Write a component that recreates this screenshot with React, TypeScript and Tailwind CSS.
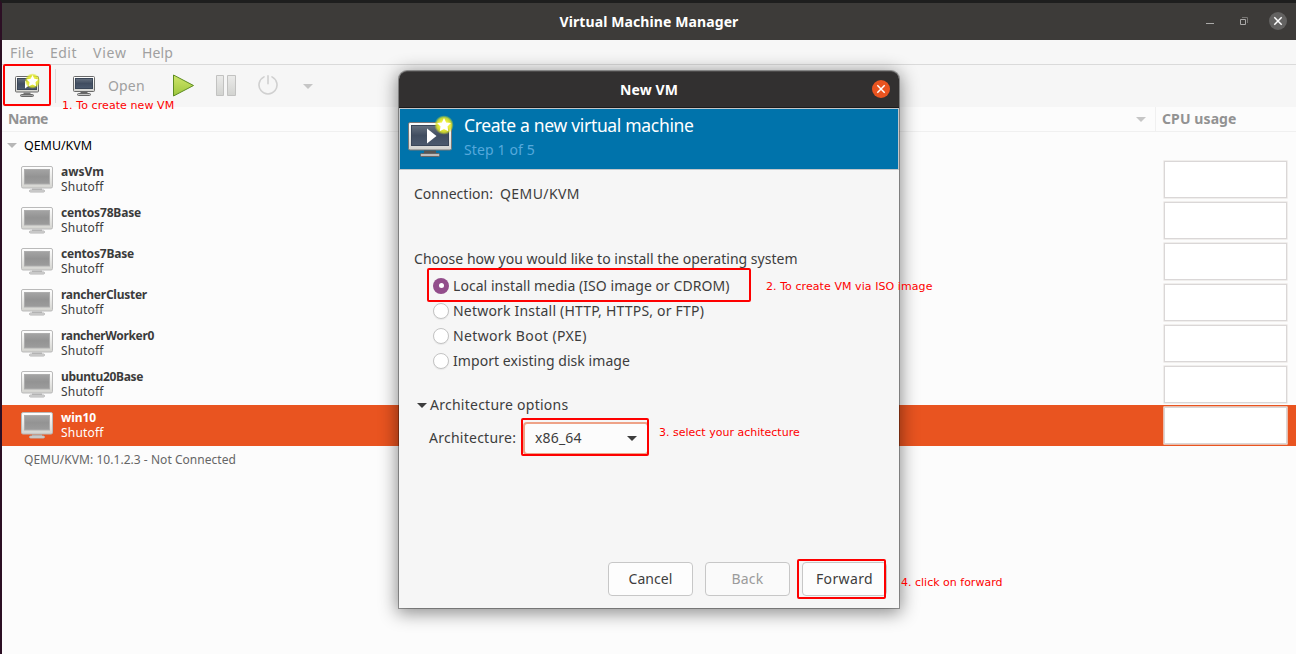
import type { ReactNode } from "react";

const STAR = "M0-6.2 1.9-2.3 6.2-1.7 3.1 1.3 3.8 5.6 0 3.6-3.8 5.6-3.1 1.3-6.2-1.7-1.9-2.3Z";

function Defs() {
  return (
    <svg className="absolute h-0 w-0" aria-hidden="true">
      <defs>
        <linearGradient id="screen" x1="0" y1="0" x2="0" y2="1">
          <stop offset="0" stopColor="#66717f" />
          <stop offset="0.5" stopColor="#414d60" />
          <stop offset="1" stopColor="#4c5a6e" />
        </linearGradient>
        <linearGradient id="bezel" x1="0" y1="0" x2="0" y2="1">
          <stop offset="0" stopColor="#ffffff" />
          <stop offset="1" stopColor="#d3d3cf" />
        </linearGradient>
        <linearGradient id="offScreen" x1="0" y1="0" x2="0" y2="1">
          <stop offset="0" stopColor="#a4a4a4" />
          <stop offset="0.5" stopColor="#939393" />
          <stop offset="1" stopColor="#9c9c9c" />
        </linearGradient>
        <linearGradient id="play" x1="0" y1="0" x2="0" y2="1">
          <stop offset="0" stopColor="#cfe66a" />
          <stop offset="1" stopColor="#9dc63c" />
        </linearGradient>
        <linearGradient id="pause" x1="0" y1="0" x2="0" y2="1">
          <stop offset="0" stopColor="#ebebea" />
          <stop offset="1" stopColor="#d2d3d0" />
        </linearGradient>
        <radialGradient id="glow">
          <stop offset="0.45" stopColor="#f0f03c" />
          <stop offset="0.75" stopColor="#dde527" stopOpacity="0.85" />
          <stop offset="1" stopColor="#d4e020" stopOpacity="0" />
        </radialGradient>
      </defs>
    </svg>
  );
}

function NewVmSmallIcon() {
  return (
    <svg width="26" height="26" viewBox="0 0 26 26" className="mb-0.5">
      <rect x="1.5" y="4.5" width="23" height="15.5" rx="1" fill="url(#bezel)" stroke="#6b6b6b" />
      <rect x="3.5" y="6.5" width="19" height="11" fill="url(#screen)" stroke="#3a4658" />
      <path d="M11 8.5 16.5 12.5 11 16.5Z" fill="#fff" />
      <path d="M9.5 20.5h7v2h-7z" fill="#777" />
      <rect x="6.5" y="22.5" width="13" height="2" rx="1" fill="#a5a5a5" stroke="#696969" />
      <circle cx="18.5" cy="9" r="7.8" fill="url(#glow)" />
      <path d={STAR} transform="translate(18.5 9) scale(.95)" fill="#fff" />
    </svg>
  );
}

function ConsoleIcon() {
  return (
    <svg width="24" height="22" viewBox="0 0 24 22">
      <rect x="1.5" y="1.5" width="21" height="15" rx="1" fill="url(#bezel)" stroke="#6b6b6b" />
      <rect x="3.5" y="3.5" width="17" height="10" fill="url(#screen)" stroke="#3a4658" />
      <path d="M8.5 17h7v2h-7z" fill="#666" />
      <rect x="5.5" y="18.5" width="13" height="2" rx="1" fill="#c5c5c5" stroke="#696969" />
    </svg>
  );
}

function BannerIcon() {
  return (
    <svg width="48" height="44" viewBox="0 0 48 44">
      <rect x="2.5" y="7.5" width="43" height="27.5" rx="1.5" fill="url(#bezel)" stroke="#777" />
      <rect x="5.5" y="10.5" width="37" height="20" fill="url(#screen)" stroke="#3a4658" />
      <path d="M21 13.5 30.5 21 21 28.5Z" fill="#fff" />
      <path d="M18 35.5h12v3H18z" fill="#555" />
      <rect x="14.5" y="38.5" width="19" height="3" rx="1" fill="#bdbdbd" stroke="#666" />
      <circle cx="38" cy="10" r="9.8" fill="url(#glow)" />
      <path d={STAR} transform="translate(38 10) scale(1.12)" fill="#fff" />
    </svg>
  );
}

function OffIcon() {
  return (
    <svg width="34" height="28" viewBox="0 0 34 28" className="mb-0.5 shrink-0">
      <rect x="1.5" y="1.5" width="31" height="21.5" rx="1.5" fill="url(#bezel)" stroke="#bababa" />
      <rect x="4.5" y="4.5" width="25" height="14.5" fill="url(#offScreen)" stroke="#adadad" />
      <path d="M12 23.5h10v2H12z" fill="#b3b3b3" />
      <rect x="9.5" y="25" width="15" height="2" rx="1" fill="#dcdcdc" stroke="#b3b3b3" />
    </svg>
  );
}

function Triangle({ className }: { className?: string }) {
  return (
    <svg width="10" height="5" viewBox="0 0 10 5" className={className}>
      <path d="M0 0h10L5 5Z" fill="currentColor" />
    </svg>
  );
}

function Cross() {
  return (
    <svg width="10" height="10" viewBox="0 0 10 10">
      <path d="M1.3 1.3 8.7 8.7M8.7 1.3 1.3 8.7" stroke="#fff" strokeWidth="1.5" />
    </svg>
  );
}

function TitleBar() {
  return (
    <header className="grid h-[37px] grid-cols-[1fr_auto_1fr] items-center bg-[#3d3b39] font-bold text-white">
      <span />
      <h1 className="tracking-[0.1px]">Virtual Machine Manager</h1>
      <div className="flex items-center justify-end pb-0.5 pr-[9px]">
        <svg width="8" height="8" viewBox="0 0 8 8" className="mr-[26px]">
          <path d="M0 6.5h8" stroke="#aaa9a8" />
        </svg>
        <svg width="8" height="8" viewBox="0 0 8 8" className="mr-[21px]">
          <path d="M.5 2.5h5v5h-5z" fill="none" stroke="#aaa9a8" />
          <path d="M2 .5h5.500V6" fill="none" stroke="#777573" />
        </svg>
        <span className="flex size-[18px] items-center justify-center rounded-full bg-[#636261]">
          <Cross />
        </span>
      </div>
    </header>
  );
}

function Toolbar() {
  return (
    <div className="flex h-[42px] items-center bg-[#f6f6f6] pl-3 text-[#a0a0a0]">
      <NewVmSmallIcon />
      <span className="ml-[15px] h-[34px] w-px bg-[#dcdcdc]" />
      <span className="ml-4"><ConsoleIcon /></span>
      <span className="ml-3 w-[37px] tracking-[0.15px]">Open</span>
      <svg width="23" height="23" viewBox="0 0 23 23" className="mb-px ml-[27px]">
        <path d="M1.5 1 21.5 11.5 1.5 22Z" fill="url(#play)" stroke="#5d8c22" strokeLinejoin="round" />
      </svg>
      <svg width="20" height="21" viewBox="0 0 20 21" className="mb-0.5 ml-[21px]">
        <path d="M.5.5h7v20h-7zM11.5.5h8v20h-8z" fill="url(#pause)" stroke="#c2c2c1" />
      </svg>
      <svg width="20" height="20" viewBox="0 0 20 20" className="mb-0.5 ml-[22px]" fill="none" stroke="#d0d0d0" strokeWidth="1.6" strokeLinecap="round">
        <path d="M6 1.9A9 9 0 1 0 14 1.9M10 .8v8" />
      </svg>
      <Triangle className="ml-[25px] text-[#c6c6c6]" />
    </div>
  );
}

function UsageBox() {
  return (
    <div className="mr-2 h-[39px] w-[125px] rounded-[1px] border border-[#ebe8e6]/70">
      <div className="h-full border border-[#dad7d7] bg-white" />
    </div>
  );
}

const machines = [
  { name: "awsVm", tracking: "tracking-[0px]" },
  { name: "centos78Base", tracking: "tracking-[-0.16px]" },
  { name: "centos7Base", tracking: "tracking-[-0.19px]" },
  { name: "rancherCluster", tracking: "tracking-[-0.25px]" },
  { name: "rancherWorker0", tracking: "tracking-[-0.34px]" },
  { name: "ubuntu20Base", tracking: "tracking-[-0.34px]" },
  { name: "win10", tracking: "tracking-[-0.08px]", selected: true },
];

function MachineList() {
  return (
    <main className="grow bg-[#fcfcfc]">
      <div className="flex h-[25px] items-center border-b border-[#f0f0f0] font-bold text-[#929292]">
        <span className="ml-1.5 grow tracking-[-0.44px]">Name</span>
        <Triangle className="mr-[9px] text-[#c6c6c6]" />
        <span className="h-full w-[141px] border-l border-[#f0f0f0] pl-1.5 leading-6 tracking-[0.1px]">CPU usage</span>
      </div>
      <div className="flex h-[27px] items-center pl-[5px] text-[12.5px] text-black">
        <Triangle className="text-[#b7b7b7]" />
        <span className="ml-[7px] tracking-[-0.05px]">QEMU/KVM</span>
      </div>
      {machines.map((m) => (
        <div
          key={m.name}
          className={`flex h-[41px] items-center pl-[18px] text-xs leading-[15px] ${m.selected ? "bg-[#e95420] text-white" : "text-[#3b3b3b]"}`}
        >
          <OffIcon />
          <div className="ml-[7px] grow pb-0.5">
            <div className={`font-bold ${m.tracking}`}>{m.name}</div>
            <div className="tracking-[0.2px]">Shutoff</div>
          </div>
          <UsageBox />
        </div>
      ))}
      <div className="pl-[22px] text-xs leading-7 tracking-[0.04px] text-[#666]">QEMU/KVM: 10.1.2.3 - Not Connected</div>
    </main>
  );
}

function Radio({ children, checked, tracking }: { children: ReactNode; checked?: boolean; tracking: string }) {
  return (
    <label className="flex h-[25px] items-center">
      <span
        className={`flex size-4 items-center justify-center rounded-full ${checked ? "bg-[#924d8b]" : "border border-[#c3c3c3] bg-white shadow-[0_1px_1px_rgba(0,0,0,0.06)]"}`}
      >
        {checked && <span className="size-[5px] rounded-full bg-white" />}
      </span>
      <span className={`ml-1 ${tracking}`}>{children}</span>
    </label>
  );
}

const button = "flex h-[34px] w-[85px] items-center justify-center rounded-[4px] border border-[#c7c7c7]";

function NewVmDialog() {
  return (
    <section className="absolute left-[399px] top-[71px] flex h-[537px] w-[500px] flex-col rounded-t-lg bg-[#f6f6f6] text-[#3d3d3d] shadow-[0_0_0_1px_rgba(0,0,0,0.32),0_3px_18px_2px_rgba(0,0,0,0.45)]">
      <header className="grid h-[37px] grid-cols-[1fr_auto_1fr] items-center rounded-t-lg border-b border-t border-b-[#1d1b1b] border-t-[#4b4949] bg-[#323030] font-bold text-white">
        <span />
        <h2 className="tracking-[0.1px]">New VM</h2>
        <span className="mb-0.5 mr-[9px] flex size-[18px] items-center justify-center justify-self-end rounded-full bg-[#e95420]">
          <Cross />
        </span>
      </header>
      <div className="flex h-[62px] shrink-0 border border-[#c3c7ca] bg-[#0073ab] pl-1.5 pt-[5px]">
        <div className="pt-px">
          <BannerIcon />
        </div>
        <div className="-mt-px ml-[10px]">
          <p className="text-[17.5px] leading-6 tracking-[-0.32px] text-white">Create a new virtual machine</p>
          <p className="pt-px leading-6 tracking-[0.14px] text-[#56a9dc]">Step 1 of 5</p>
        </div>
      </div>
      <div className="flex grow flex-col px-[15px]">
        <p className="mt-[10px] flex h-7 items-center">
          <span className="w-[86px] tracking-[0.02px]">Connection:</span>
          <span className="tracking-[0.42px]">QEMU/KVM</span>
        </p>
        <p className="mt-[37px] flex h-7 items-center tracking-[0.03px]">Choose how you would like to install the operating system</p>
        <div className="ml-[19px]">
          <Radio checked tracking="tracking-[0.05px]">Local install media (ISO image or CDROM)</Radio>
          <Radio tracking="tracking-[0.2px]">Network Install (HTTP, HTTPS, or FTP)</Radio>
          <Radio tracking="tracking-[0.36px]">Network Boot (PXE)</Radio>
          <Radio tracking="tracking-[0.06px]">Import existing disk image</Radio>
        </div>
        <p className="ml-[3px] mt-[18px] flex h-7 items-center">
          <Triangle className="mr-[3px]" />
          <span className="tracking-[0.25px]">Architecture options</span>
        </p>
        <div className="ml-[15px] mt-0.5 flex items-center">
          <span className="w-[94px] tracking-[0.25px]">Architecture:</span>
          <div className="mt-px flex h-[33px] w-[126px] items-center justify-between rounded-[4px] border-2 border-[#eea287] bg-[#fcfcfc] pb-px pl-[10px] pr-[10px]">
            <span className="tracking-[0.18px]">x86_64</span>
            <Triangle />
          </div>
        </div>
        <div className="-mr-[3px] mt-auto flex justify-end gap-3 pb-3">
          <button className={`${button} bg-[#fdfdfd] tracking-[0.07px]`}>Cancel</button>
          <button className={`${button} bg-[#fafafa] tracking-[0.21px] text-[#9b9b9b]`}>Back</button>
          <button className={`${button} bg-[#fdfdfd] tracking-[0.36px]`}>Forward</button>
        </div>
      </div>
    </section>
  );
}

const frame = "pointer-events-none absolute rounded-[2px] border-2 border-[#fe0000]";
const note = "pointer-events-none absolute whitespace-nowrap font-['DejaVu_Sans',sans-serif] text-[11px] leading-[14px] text-[#fe0000]";

function Annotations() {
  return (
    <>
      <div className={`${frame} left-[3px] top-16 h-[42px] w-12`} />
      <div className={`${frame} left-[427px] top-[268px] h-[34px] w-[324px]`} />
      <div className={`${frame} left-[521px] top-[418px] h-[38px] w-32`} />
      <div className={`${frame} left-[797px] top-[559px] h-10 w-[89px]`} />
      <p className={`${note} left-[62px] top-[99px] tracking-[0.08px]`}>1. To create new VM</p>
      <p className={`${note} left-[766px] top-[280px] tracking-[0.07px]`}>2. To create VM via ISO image</p>
      <p className={`${note} left-[659px] top-[426px]`}>3. select your achitecture</p>
      <p className={`${note} left-[901px] top-[576px]`}>4. click on forward</p>
    </>
  );
}

export default function App() {
  return (
    <div className="relative flex h-[654px] w-[1296px] flex-col overflow-hidden border-l-2 border-t-[3px] border-l-[#2c0f24] border-t-[#1e1e1e] font-['Noto_Sans',sans-serif] text-[14px] leading-5">
      <Defs />
      <TitleBar />
      <nav className="flex h-[25px] items-center border-b border-[#dadada] bg-[#f7f7f7] pl-2 pt-0.5 text-[#a0a0a0]">
        <span className="w-10 tracking-[0.4px]">File</span>
        <span className="w-[43px] tracking-[0.49px]">Edit</span>
        <span className="w-[49px] tracking-[0.8px]">View</span>
        <span className="tracking-[0.13px]">Help</span>
      </nav>
      <Toolbar />
      <MachineList />
      <div className="absolute -left-0.5 -top-[3px]">
        <NewVmDialog />
        <Annotations />
      </div>
    </div>
  );
}
